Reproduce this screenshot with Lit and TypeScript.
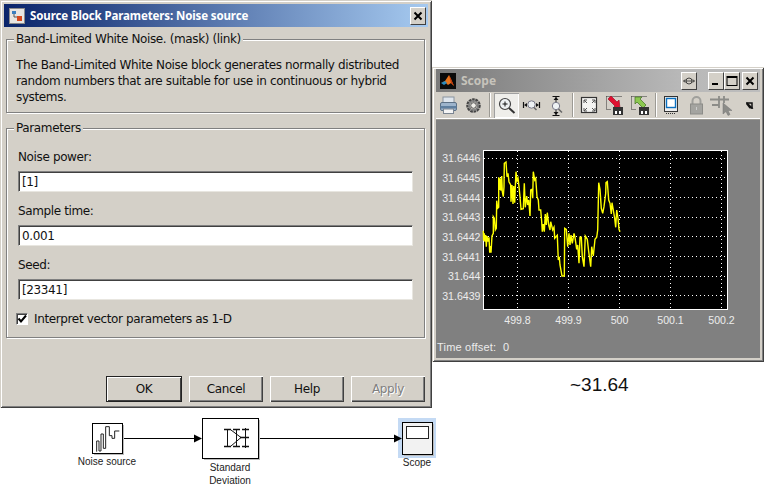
import { LitElement, html, css, svg } from "lit";
import { customElement } from "lit/decorators.js";

const zoomTrace = "10,242 11,272 13,250 15,275 17,255 19,290 21,258 24,275 27,262 29,308 31,288 33,308 36,258 40,250 40,200 43,205 46,240 49,235 50,152 53,175 56,172 56,82 59,120 60,85 63,122 65,78 67,125 70,140 72,110 73,40 78,36 81,80 84,70 87,95 92,105 93,155 96,105 99,162 101,108 104,158 106,110 108,65 111,92 114,85 117,110 120,140 123,178 130,176 133,100 136,172 140,138 143,165 146,150 150,198 152,120 156,118 158,145 160,65 164,90 167,85 171,140 175,150 177,180 182,180 185,215 187,245 190,222 193,245 196,192 199,225 202,188 206,225 210,240 212,215 218,240 222,232 224,265 232,256 235,330 238,320 240,345 246,378 253,378 254,235 259,238 263,290 267,250 270,285 273,255 277,280 282,250 285,262 290,298 293,285 297,340 300,262 304,262 307,320 312,350 316,258 322,268 326,305 332,350 335,290 340,318 345,268 350,262 353,240 356,98 360,118 364,175 368,190 372,170 377,130 378,98 382,95 386,150 390,160 394,192 396,158 400,180 404,205 407,232 410,180 414,205 417,238 420,245";
const tracePts = zoomTrace.split(" ").map((p) => {
  const [x, y] = p.split(",").map(Number);
  return `${(480 + x / 3 - 436).toFixed(1)},${(150 + y / 3 - 120).toFixed(1)}`;
}).join(" ");

const gx = [517.5, 568.5, 619.5, 670.5, 721.5];
const gy = [158, 177.5, 197.5, 217, 236.5, 256.5, 276, 295.5];
const yLabels = ["31.6446", "31.6445", "31.6444", "31.6443", "31.6442", "31.6441", "31.644", "31.6439"];
const xLabels = ["499.8", "499.9", "500", "500.1", "500.2"];

const ic = (body: unknown) => html`<svg class="ic" width="25" height="25" viewBox="0 0 25 25">${body}</svg>`;

const icons = {
  printer: ic(svg`<rect x="7" y="4" width="11" height="6" fill="#dfe6ee" stroke="#8a94a0"/><rect x="4.5" y="9.5" width="16" height="8" rx="1.5" fill="#9db4cc" stroke="#5d7186"/><rect x="4.5" y="13" width="16" height="2.5" fill="#5f7f9f"/><rect x="7.5" y="16" width="10" height="4.5" fill="#f4f4f4" stroke="#7c8692"/>`),
  gear: ic(svg`<circle cx="12.5" cy="12.5" r="5.5" fill="none" stroke="#444" stroke-width="3.5" stroke-dasharray="2.4 .6"/><circle cx="12.5" cy="12.5" r="4.6" fill="none" stroke="#888" stroke-width="1.5"/><circle cx="12.5" cy="12.5" r="2.8" fill="#f0eee8" stroke="#555"/>`),
  zoomIn: ic(svg`<circle cx="11" cy="11" r="5.5" fill="#eef2f4" stroke="#444" stroke-width="1.2"/><path d="M8.5 11h5M11 8.5v5" stroke="#111"/><path d="M15 15l5.5 5" stroke="#333" stroke-width="2"/>`),
  zoomX: ic(svg`<circle cx="12.5" cy="11.5" r="3.7" fill="#eef2f4" stroke="#778"/><path d="M15 14.5l2.500 2.500" stroke="#666" stroke-width="1.500"/><path d="M4.500 9v6M20.500 9v6" stroke="#111" stroke-width="1.200"/><path d="M5 12l3-2v4zM20 12l-3-2v4z" fill="#111"/>`),
  zoomY: ic(svg`<circle cx="12" cy="13" r="3.7" fill="#eef2f4" stroke="#778"/><path d="M14.5 16l3.5 3.5" stroke="#666" stroke-width="1.5"/><path d="M8.5 3.500h7M8.5 22.500h7" stroke="#111" stroke-width="1.2"/><path d="M12 4v5M12 22v-5" stroke="#222"/><path d="M12 4l-2.500 3h5zM12 22l-2.500-3h5z" fill="#111"/>`),
  auto: ic(svg`<rect x="4.5" y="4.5" width="15" height="15" fill="#f4f4f2" stroke="#333" stroke-width="1.2"/><path d="M7 7l3 3M7 7h3M7 7v3M18 7l-3 3M18 7h-3M18 7v3M7 18l3-3M7 18h3M7 18v-3M18 18l-3-3M18 18h-3M18 18v-3" stroke="#555" fill="none"/>`),
  save: ic(svg`<path d="M4.500 3.500v13h5M4.500 3.500h15" stroke="#333" fill="none" stroke-dasharray="1 1"/><path d="M6 6l3-3 6 6 2-2 1 8h-7l2-2z" fill="#e01030" stroke="#a01028" stroke-width=".7"/><rect x="11" y="14" width="10" height="8" fill="#333"/><rect x="13" y="18" width="2" height="3" fill="#fff"/><rect x="17" y="18" width="2" height="3" fill="#fff"/>`),
  restore: ic(svg`<path d="M4.500 3.500v13h5M4.500 3.500h15" stroke="#333" fill="none" stroke-dasharray="1 1"/><path d="M8 4h7l-2 2 6 6-3 3-6-6-2 2z" fill="#8cc850" stroke="#3f7020" stroke-width=".7"/><rect x="12" y="14" width="10" height="8" fill="#333"/><rect x="14" y="18" width="2" height="3" fill="#fff"/><rect x="18" y="18" width="2" height="3" fill="#fff"/>`),
  page: ic(svg`<rect x="5.5" y="3.5" width="13" height="15" fill="#eee" stroke="#333"/><rect x="7.5" y="5.5" width="9" height="9" fill="#fff" stroke="#0a70c0" stroke-width="1.4"/><path d="M7 20.5h10" stroke="#333" stroke-dasharray="1 1"/>`),
  lock: ic(svg`<path d="M8.5 11V8a4 4 0 018 0v3" fill="none" stroke="#a0a09c" stroke-width="2"/><rect x="6.5" y="11" width="12" height="10" fill="#a4a4a0" stroke="#8c8c88"/><path d="M12.5 14v3" stroke="#ccc"/>`),
  cursor: ic(svg`<path d="M1 6.500h19M10 3v12M15 3v7M3 12h7" stroke="#8c8c88" stroke-width="1.800" fill="none"/><path d="M14 10v11l3-2.500 2 4 2-1-2-4h4z" fill="#8c8c88" stroke="#777" stroke-width=".5"/>`),
  arrow: ic(svg`<path d="M9 10h6v6" fill="none" stroke="#111" stroke-width="1.500"/><path d="M9 11l1.500-1.500 6 6-4 0z" fill="#111"/>`),
};

@customElement("app-root")
export class AppRoot extends LitElement {
  static styles = css`
    :host { display: block; position: relative; width: 770px; height: 491px; background: #fff; overflow: hidden;
      font-family: "DejaVu Sans", sans-serif; font-size: 12px; color: #111; }
    .win { position: absolute; box-sizing: border-box; background: #d4d0c8;
      box-shadow: inset 1px 1px 0 #d4d0c8, inset -1px -1px 0 #404040, inset 2px 2px 0 #fff, inset -2px -2px 0 #808080; }
    .dialog { left: 0; top: 0; width: 432px; height: 408px; padding: 4px 4px 0; }
    .scope { left: 432px; top: 67px; width: 332px; height: 295px; padding: 2px 4px 0; }
    .title { height: 23px; display: flex; align-items: center; box-sizing: border-box; font-family: "Noto Sans", sans-serif; font-weight: bold; }
    .dialog .title { background: linear-gradient(90deg, #0a246a, #a6caf0); color: #fff; padding: 0 2px 0 5px; gap: 5px; }
    .dialog .title span { flex: 1; font-size: 11.5px; letter-spacing: -.12px; }
    .scope .title { background: linear-gradient(90deg, #7a7a7a, #b8b8b8 75%, #bdbdbd); color: #c6c3bb; padding: 0 2px 0 4px; font-size: 12px; }
    .scope .title span { flex: 1; margin-left: 5px; }
    .tbtn { box-sizing: border-box; width: 16px; height: 18px; background: #d4d0c8; display: flex; align-items: center; justify-content: center;
      border: 1px solid; border-color: #fff #404040 #404040 #fff; }
    .tbtn.dock { margin-right: 11px; }
    .tbtn.gapr { margin-right: 2px; }
    .body { padding: 12px 3px 0 2px; }
    .group { position: relative; box-sizing: border-box; border: 1px solid #808080; box-shadow: 1px 1px 0 #fff, inset 1px 1px 0 #fff; letter-spacing: -.37px; }
    .legend { position: absolute; top: -9px; left: 7px; padding: 0 2px; background: #d4d0c8; line-height: 16px; }
    .g1 { height: 74px; padding: 17px 9px 0; line-height: 16px; }
    .g2 { height: 210px; margin-top: 15px; padding: 21px 11px 0; }
    .lbl { height: 15px; line-height: 15px; margin-bottom: 6px; }
    .field { box-sizing: border-box; height: 21px; background: #fff; padding: 0 3px; line-height: 21px; margin-bottom: 12px;
      border: 1px solid; border-color: #808080 #e8e6e0 #e8e6e0 #808080; box-shadow: inset 1px 1px 0 #404040; width: 395px; }
    .check { display: flex; align-items: center; gap: 6px; margin-left: -2px; }
    .box { box-sizing: border-box; width: 12px; height: 12px; background: #fff; border: 1px solid; border-color: #808080 #fff #fff #808080; box-shadow: inset 1px 1px 0 #404040; display: flex; }
    .btns { display: flex; justify-content: flex-end; gap: 7px; margin-top: 38px; letter-spacing: -.37px; }
    .btn { box-sizing: border-box; width: 74px; height: 26px; background: #d4d0c8; display: flex; align-items: center; justify-content: center;
      box-shadow: inset 1px 1px 0 #fff, inset -1px -1px 0 #404040, inset -2px -2px 0 #808080; }
    .btn.def { width: 76px; box-shadow: inset 0 0 0 1px #222, inset 2px 2px 0 #fff, inset -2px -2px 0 #404040; }
    .btn.off { color: #808080; text-shadow: 1px 1px 0 #fff; }
    .tools { display: flex; align-items: center; height: 26px; box-sizing: border-box; }
    .cell { width: 25px; height: 25px; flex: none; display: flex; }
    .cell.on { background: #efeeea; box-shadow: inset 1px 1px 0 #a0a0a0, inset -1px -1px 0 #fff; }
    .cell.last { margin-left: 3px; }
    .ic { display: block; }
    .sep { width: 2px; height: 24px; background: linear-gradient(90deg, #9c9a94 50%, #fff 50%); margin: 0 3px; flex: none; }
    .sep.tight { margin-right: 2px; }
    .rule { height: 2px; background: linear-gradient(#fff 50%, #9c9a94 50%); }
    .plot { display: block; background: #808080; }
    .plot text { font-family: "Liberation Sans", sans-serif; font-size: 10.6px; fill: #ececec; }
    .plot text.off { font-size: 11px; letter-spacing: .2px; }
    .note { position: absolute; left: 570px; top: 374px; font: 19px/22px "Liberation Sans", sans-serif; color: #111; }
    .diagram { position: absolute; left: 0; top: 408px; display: block; }
    .diagram text { font-family: "Liberation Sans", sans-serif; font-size: 10px; fill: #222; text-anchor: middle; }
  `;

  render() {
    return html`
      <div class="win dialog">
        <div class="title">
          <svg width="16" height="16" viewBox="0 0 16 16"><rect x=".5" y=".5" width="15" height="15" fill="#e8e6e2" stroke="#8a8a8a"/><path d="M3 3h4v3H3z" fill="#3a7fc0"/><path d="M5 6v3h3" stroke="#555" fill="none"/><rect x="8" y="8" width="5" height="5" fill="#d8481c"/></svg>
          <span>Source Block Parameters: Noise source</span>
          <div class="tbtn"><svg width="10" height="10" viewBox="0 0 10 10"><path d="M1.500 1.500l7 7M8.500 1.500l-7 7" stroke="#000" stroke-width="2"/></svg></div>
        </div>
        <div class="body">
          <div class="group g1">
            <div class="legend">Band-Limited White Noise. (mask) (link)</div>
            The Band-Limited White Noise block generates normally distributed<br />random numbers that are suitable for use in continuous or hybrid<br />systems.
          </div>
          <div class="group g2">
            <div class="legend">Parameters</div>
            <div class="lbl">Noise power:</div>
            <div class="field">[1]</div>
            <div class="lbl">Sample time:</div>
            <div class="field">0.001</div>
            <div class="lbl">Seed:</div>
            <div class="field">[23341]</div>
            <div class="check">
              <div class="box"><svg width="10" height="10" viewBox="0 0 10 10"><path d="M1.500 4.500l2.500 3 5-6" stroke="#000" stroke-width="2" fill="none"/></svg></div>
              <span>Interpret vector parameters as 1-D</span>
            </div>
          </div>
          <div class="btns">
            <div class="btn def">OK</div>
            <div class="btn">Cancel</div>
            <div class="btn">Help</div>
            <div class="btn off">Apply</div>
          </div>
        </div>
      </div>

      <div class="win scope">
        <div class="title">
          <svg width="16" height="16" viewBox="0 0 16 16"><rect width="16" height="16" fill="#0a0a0a"/><path d="M1 10l4-2 4-6 2 4 3 7-3-3-3 2-3-3z" fill="#e8741c"/><path d="M1 10l4-2 2 2-3 2z" fill="#2a8cc0"/><path d="M9 2l2 4 3 7-3-3z" fill="#c03a10"/></svg>
          <span>Scope</span>
          <div class="tbtn dock"><svg width="12" height="10" viewBox="0 0 12 10"><circle cx="6" cy="5" r="3" fill="none" stroke="#222" stroke-width=".8"/><path d="M.5 5h11M.5 5l2-1.500M.5 5l2 1.500M11.500 5l-2-1.500M11.500 5l-2 1.500" stroke="#222" stroke-width=".7" fill="none"/></svg></div>
          <div class="tbtn"><svg width="10" height="10" viewBox="0 0 10 10"><rect x="1" y="7" width="6" height="2" fill="#000"/></svg></div>
          <div class="tbtn gapr"><svg width="12" height="12" viewBox="0 0 12 12"><rect x="1" y="1.500" width="10" height="9" fill="none" stroke="#000"/><rect x="1" y="1" width="10" height="2" fill="#000"/></svg></div>
          <div class="tbtn"><svg width="10" height="10" viewBox="0 0 10 10"><path d="M1.500 1.500l7 7M8.500 1.500l-7 7" stroke="#000" stroke-width="2"/></svg></div>
        </div>
        <div class="tools">
          <div class="cell">${icons.printer}</div>
          <div class="cell">${icons.gear}</div>
          <div class="sep"></div>
          <div class="cell on">${icons.zoomIn}</div>
          <div class="cell">${icons.zoomX}</div>
          <div class="cell">${icons.zoomY}</div>
          <div class="sep"></div>
          <div class="cell">${icons.auto}</div>
          <div class="cell">${icons.save}</div>
          <div class="cell">${icons.restore}</div>
          <div class="sep tight"></div>
          <div class="cell">${icons.page}</div>
          <div class="cell">${icons.lock}</div>
          <div class="cell">${icons.cursor}</div>
          <div class="cell last">${icons.arrow}</div>
        </div>
        <div class="rule"></div>
        <svg class="plot" width="324" height="238" viewBox="0 0 324 238">
          <rect x="47.500" y="30.500" width="244" height="159" fill="#000" stroke="#fff"/>
          <g stroke="#fff" stroke-dasharray="1 3" shape-rendering="crispEdges">
            ${gx.map((x) => svg`<line x1=${x - 436} x2=${x - 436} y1="31" y2="190"/>`)}
            ${gy.map((y) => svg`<line x1="48" x2="291" y1=${y - 120} y2=${y - 120}/>`)}
          </g>
          <polyline points=${tracePts} fill="none" stroke="#ffff00" stroke-width="1.400"/>
          ${gy.map((y, i) => svg`<text x="44.500" y=${y - 120 + 4} text-anchor="end">${yLabels[i]}</text>`)}
          ${gx.map((x, i) => svg`<text x=${x - 436} y="203.500" text-anchor="middle">${xLabels[i]}</text>`)}
          <text class="off" x="1" y="231">Time offset:</text>
          <text class="off" x="67" y="231">0</text>
        </svg>
      </div>

      <div class="note">~31.64</div>

      <svg class="diagram" width="770" height="83" viewBox="0 408 770 83">
        <rect x="398" y="418" width="38" height="40" fill="#c4daf4"/>
        <path d="M123 438.500H195M258 438.500H395" stroke="#000"/>
        <path d="M194 434.500l8 4-8 4zM394 434.500l8 4-8 4z" fill="#000"/>
        <rect x="94" y="425" width="30" height="30" fill="#bbb"/>
        <rect x="92.500" y="423.500" width="30" height="30" fill="#fff" stroke="#000"/>
        <g transform="translate(80 415) scale(.3333)" fill="none" stroke="#222" stroke-width="3">
          <path d="M50 110V78H57V108H63V57H70V100H77V35H88V62H96V70H104V48H118"/>
        </g>
        <rect x="204" y="420" width="56" height="40" fill="#bbb"/>
        <rect x="202.500" y="418.500" width="56" height="40" fill="#fff" stroke="#000"/>
        <g stroke="#111" fill="none">
          <path d="M224 429.500h7M224 446.500h7M233 429.500h7M233 446.500h7M242 429.500h7M242 446.500h7M240 437.500h9" stroke-width="1.500"/>
          <path d="M227.500 429v18M236.500 429v18M245.500 428v20M231 430l10 7.500-10 8.500"/>
        </g>
        <rect x="404" y="424" width="30" height="32" fill="#bbb"/>
        <rect x="402.500" y="422.500" width="30" height="32" fill="#f2f2f2" stroke="#000"/>
        <rect x="406.500" y="426.500" width="22" height="12" fill="#fff" stroke="#222"/>
        <text x="107" y="464.500">Noise source</text>
        <text x="230" y="470.500">Standard</text>
        <text x="230" y="483.500">Deviation</text>
        <text x="417" y="465.500">Scope</text>
      </svg>
    `;
  }
}
